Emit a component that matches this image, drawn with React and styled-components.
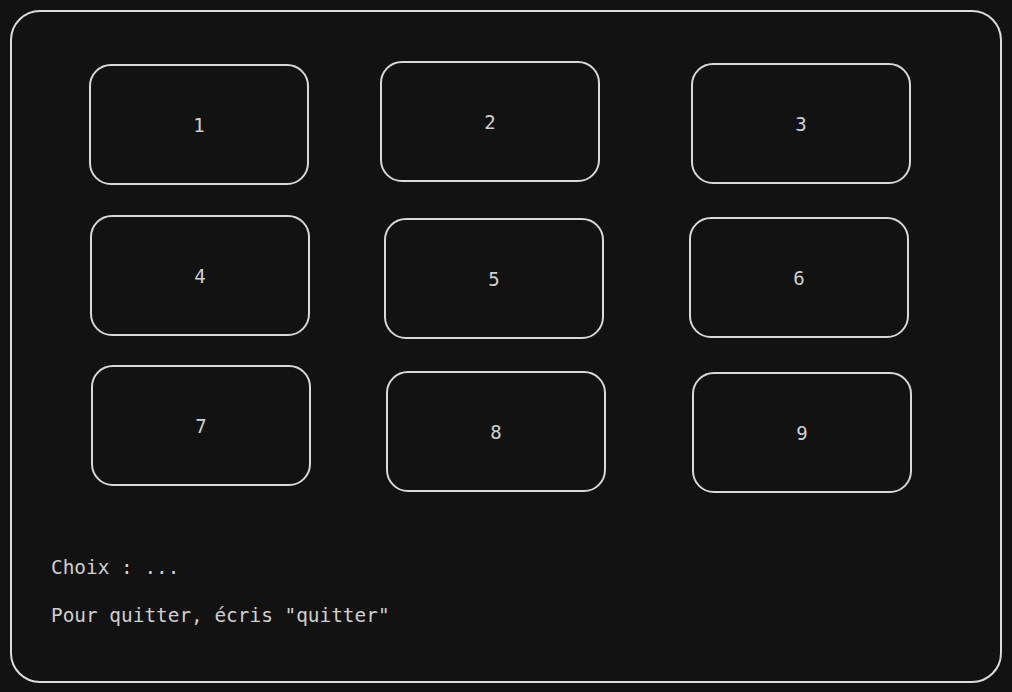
import styled, { createGlobalStyle } from "styled-components";

const GlobalStyle = createGlobalStyle`
  html, body {
    margin: 0;
    padding: 0;
    background: #121212;
  }
  body {
    font-family: "DejaVu Sans Mono", "Liberation Mono", monospace;
    color: #d0d0d0;
  }
`;

// small offsets keep the hand-drawn, slightly uneven look of the sketch
const cells = [
  { label: "1", dx: 0, dy: 1 },
  { label: "2", dx: -3, dy: -2 },
  { label: "3", dx: 0, dy: 0 },
  { label: "4", dx: 1, dy: -2 },
  { label: "5", dx: 1, dy: 1 },
  { label: "6", dx: -2, dy: 0 },
  { label: "7", dx: 2, dy: -4 },
  { label: "8", dx: 3, dy: 2 },
  { label: "9", dx: 1, dy: 3 },
];

const Frame = styled.div`
  box-sizing: border-box;
  margin: 10px 0 0 10px;
  width: 992px;
  height: 673px;
  border: 2px solid #dcdcdc;
  border-radius: 30px;
  padding: 51px 0 0 0;
  display: flex;
  flex-direction: column;
`;

const Board = styled.div`
  display: grid;
  grid-template-columns: 294px 308px 220px;
  grid-template-rows: 154px 152px 122px;
  padding-left: 77px;
`;

const Cell = styled.div`
  box-sizing: border-box;
  width: 220px;
  height: 121px;
  margin-left: ${(p) => p.$dx}px;
  margin-top: ${(p) => p.$dy}px;
  border: 2px solid #d8d8d8;
  border-radius: 22px;
  display: flex;
  align-items: center;
  justify-content: center;
  font-size: 19px;
  color: #d0d0d0;
`;

const Prompt = styled.div`
  padding: 65px 0 0 39px;
  display: flex;
  flex-direction: column;
  gap: 24px;
  font-size: 19.4px;
  line-height: 24px;
  white-space: pre;
`;

export default function App() {
  return (
    <>
      <GlobalStyle />
      <Frame>
        <Board>
          {cells.map((c) => (
            <Cell key={c.label} $dx={c.dx} $dy={c.dy}>
              {c.label}
            </Cell>
          ))}
        </Board>
        <Prompt>
          <div>Choix : ...</div>
          <div>Pour quitter, écris "quitter"</div>
        </Prompt>
      </Frame>
    </>
  );
}
